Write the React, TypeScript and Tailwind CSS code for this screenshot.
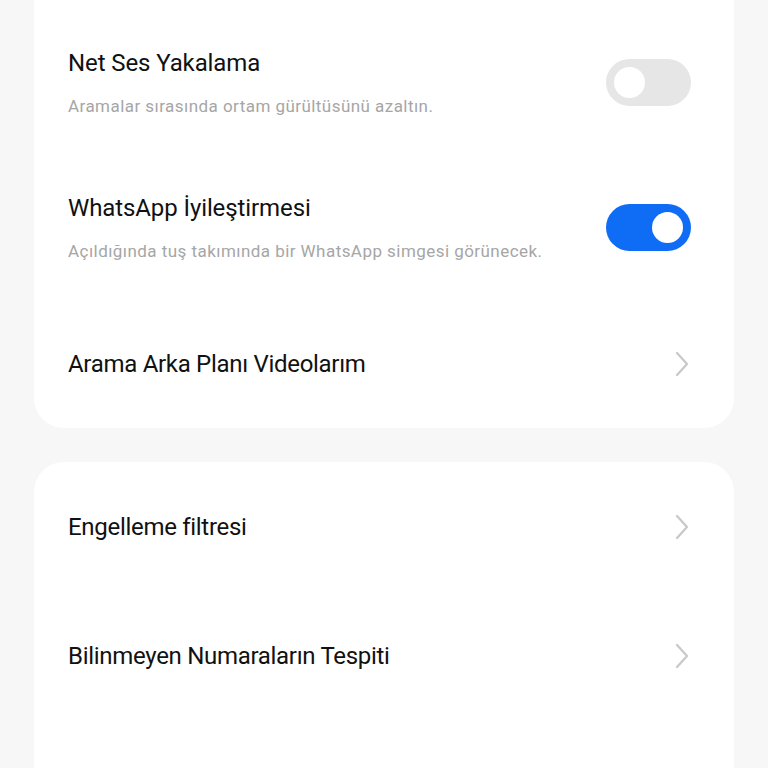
import React from 'react';

const font = { fontFamily: 'Roboto, "Noto Sans", sans-serif' };

const Toggle: React.FC<{ on: boolean }> = ({ on }) => (
  <div
    className={`flex h-[47px] w-[85px] shrink-0 items-center rounded-full px-[8px] ${
      on ? 'justify-end bg-[#0f6cf5]' : 'justify-start bg-[#e6e6e6]'
    }`}
  >
    <div className="h-[31px] w-[31px] rounded-full bg-white" />
  </div>
);

const Chevron = () => (
  <svg width="16" height="28" viewBox="0 0 16 28" className="mr-[1px] shrink-0">
    <path d="M3 3 L13 14 L3 25" fill="none" stroke="#c9c9c9" strokeWidth="2.3" strokeLinecap="round" strokeLinejoin="round" />
  </svg>
);

const SwitchRow: React.FC<{ title: string; sub: string; on: boolean; h: string }> = ({ title, sub, on, h }) => (
  <div className={`flex items-center justify-between pl-[34px] pr-[43px] ${h}`}>
    <div className="flex flex-col">
      <div className="text-[24px] leading-[30px] tracking-[-0.1px] text-[#111]">{title}</div>
      <div className="mt-[17px] text-[17px] leading-[22px] tracking-[0.45px] text-[#a6a6a6]">{sub}</div>
    </div>
    <Toggle on={on} />
  </div>
);

const LinkRow: React.FC<{ title: string; h: string }> = ({ title, h }) => (
  <div className={`flex items-center justify-between pl-[34px] pr-[43px] ${h}`}>
    <div className="text-[24px] leading-[30px] tracking-[-0.3px] text-[#111]">{title}</div>
    <Chevron />
  </div>
);

export default function App() {
  return (
    <div className="h-[768px] overflow-hidden bg-[#f7f7f7] px-[34px]" style={font}>
      <div className="-mt-[40px] rounded-[30px] bg-white pt-[50px]">
        <SwitchRow
          title="Net Ses Yakalama"
          sub="Aramalar sırasında ortam gürültüsünü azaltın."
          on={false}
          h="h-[145px]"
        />
        <SwitchRow
          title="WhatsApp İyileştirmesi"
          sub="Açıldığında tuş takımında bir WhatsApp simgesi görünecek."
          on={true}
          h="h-[145px]"
        />
        <LinkRow title="Arama Arka Planı Videolarım" h="h-[128px]" />
      </div>
      <div className="mt-[34px] rounded-[30px] bg-white pb-[60px]">
        <LinkRow title="Engelleme filtresi" h="h-[130px]" />
        <LinkRow title="Bilinmeyen Numaraların Tespiti" h="h-[128px]" />
        <div className="h-[128px]" />
      </div>
    </div>
  );
}
